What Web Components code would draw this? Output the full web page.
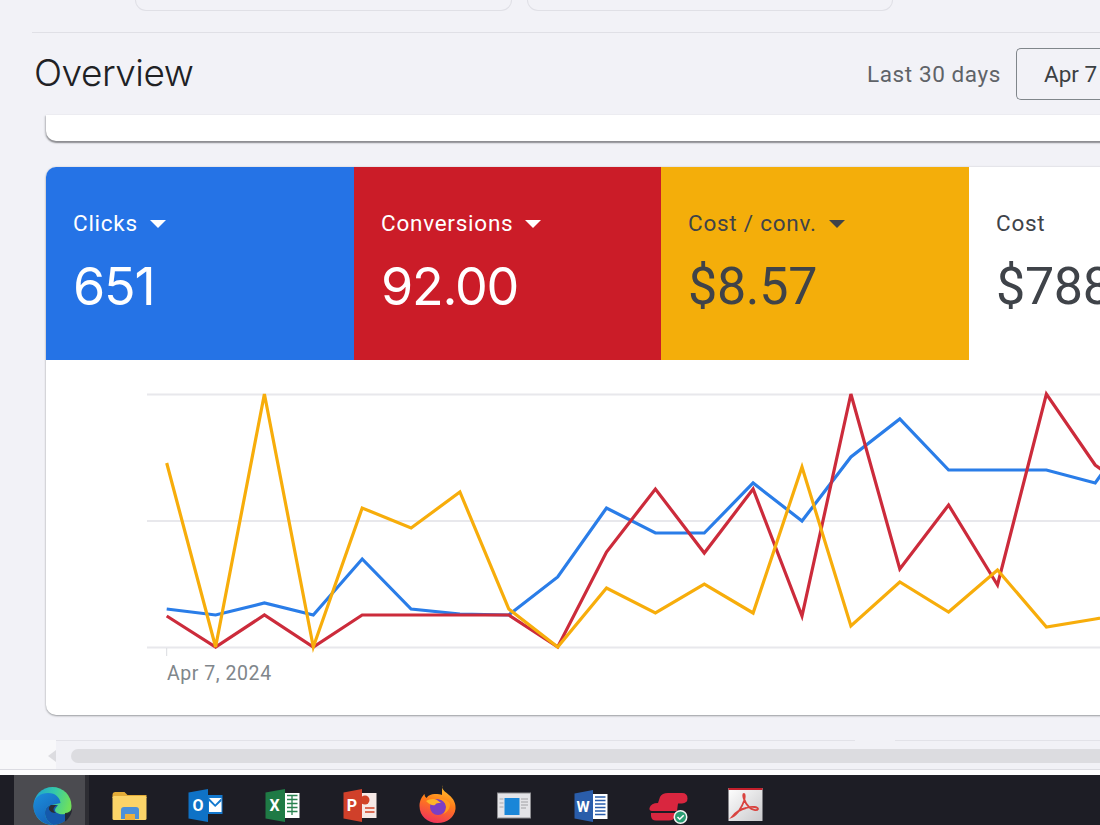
<!DOCTYPE html>
<html>
<head>
<meta charset="utf-8">
<title>Overview</title>
<style>
  html,body{margin:0;padding:0;height:825px;overflow:hidden;background:#f2f2f7;}
  body{font-family:"Roboto","Liberation Sans",sans-serif;}
</style>
</head>
<body>
<ads-page>
  <filter-stubs></filter-stubs>
  <overview-bar heading="Overview" range="Last 30 days" date="Apr 7"></overview-bar>
  <summary-stub></summary-stub>
  <metric-card>
    <metric-tile slot="tiles" label="Clicks" value="651" bg="#2573e6" fg="#fff" arrow font="Inter" tight></metric-tile>
    <metric-tile slot="tiles" label="Conversions" value="92.00" bg="#cb1c28" fg="#fff" arrow font="Inter" tight></metric-tile>
    <metric-tile slot="tiles" label="Cost / conv." value="$8.57" bg="#f4ae0a" fg="#3f4349" arrow></metric-tile>
    <metric-tile slot="tiles" label="Cost" value="$788" bg="#fff" fg="#3f4349"></metric-tile>
    <line-chart slot="chart" axis="Apr 7, 2024"></line-chart>
  </metric-card>
  <page-scrollbar></page-scrollbar>
  <task-bar></task-bar>
</ads-page>

<script>
class AdsPage extends HTMLElement {
  constructor(){
    super()
    this.attachShadow({mode:'open'}).innerHTML = `
      <style>
        :host{display:flex;flex-direction:column;width:1100px;height:825px;overflow:hidden;background:#f2f2f7;}
      </style>
      <slot></slot>`
  }
}

class FilterStubs extends HTMLElement {
  constructor(){
    super()
    this.attachShadow({mode:'open'}).innerHTML = `
      <style>
        :host{display:flex;gap:15px;height:11px;padding-left:135px;margin-bottom:21px;flex:none;}
        div{box-sizing:border-box;height:11px;border:1px solid #e0e0e6;border-top:0;border-radius:0 0 24px 24px;background:#f2f2f7;}
        .a{width:377px;}
        .b{width:366px;}
      </style>
      <div class="a"></div><div class="b"></div>`
  }
}

class OverviewBar extends HTMLElement {
  constructor(){
    super()
    this.attachShadow({mode:'open'}).innerHTML = `
      <style>
        :host{display:flex;flex:none;box-sizing:border-box;height:83px;margin-left:32px;border-top:1px solid #e0e0e6;align-items:flex-start;white-space:nowrap;}
        h1{margin:17px 0 0 2px;font:300 37px/46px "Inter","Roboto",sans-serif;letter-spacing:-.5px;color:#202124;flex:1;}
        .range{font:400 22.5px/52px "Roboto",sans-serif;color:#5f6368;margin:15px 15px 0 0;letter-spacing:.6px;}
        .date{box-sizing:border-box;flex:none;width:84px;height:52px;margin-top:15px;padding-left:27px;border:1px solid #80868b;border-right:0;border-radius:5px 0 0 5px;font:400 22.5px/50px "Roboto",sans-serif;color:#3c4043;overflow:hidden;}
      </style>
      <h1></h1><span class="range"></span><div class="date"></div>`
  }
  connectedCallback(){
    const root = this.shadowRoot
    root.querySelector('h1').textContent = this.getAttribute('heading')
    root.querySelector('.range').textContent = this.getAttribute('range')
    root.querySelector('.date').textContent = this.getAttribute('date')
  }
}

class SummaryStub extends HTMLElement {
  constructor(){
    super()
    this.attachShadow({mode:'open'}).innerHTML = `
      <style>
        :host{display:block;flex:none;height:26px;margin:0 -20px 26px 46px;background:#fff;border-radius:0 0 10px 10px;box-shadow:0 1.5px 1.5px 0 #8e8e92,-1px 1px 2px rgba(60,64,67,.25);}
      </style>`
  }
}

class MetricCard extends HTMLElement {
  constructor(){
    super()
    this.attachShadow({mode:'open'}).innerHTML = `
      <style>
        :host{display:block;flex:none;width:1300px;height:548px;margin-left:46px;background:#fff;border-radius:10px;overflow:hidden;box-shadow:0 1px 2px rgba(60,64,67,.45),0 0 2px rgba(60,64,67,.15);}
        .tiles{display:grid;grid-template-columns:308px 307px 308px 1fr;height:193px;}
      </style>
      <div class="tiles"><slot name="tiles"></slot></div>
      <slot name="chart"></slot>`
  }
}

class MetricTile extends HTMLElement {
  constructor(){
    super()
    this.attachShadow({mode:'open'}).innerHTML = `
      <style>
        :host{display:block;box-sizing:border-box;padding:42px 0 0 27px;background:var(--bg);color:var(--fg);white-space:nowrap;overflow:hidden;}
        .label{display:flex;align-items:center;gap:12px;height:28px;font:400 22.5px/28px "Roboto",sans-serif;letter-spacing:.75px;}
        .arrow{width:0;height:0;border:8px solid transparent;border-top:8px solid currentColor;border-bottom:0;margin-top:1px;}
        .value{margin-top:20px;font-weight:400;font-size:52px;line-height:60px;letter-spacing:-.3px;}
        :host([tight]) .value{letter-spacing:-1.2px;}
      </style>
      <div class="label"><span class="text"></span></div>
      <div class="value"></div>`
  }
  connectedCallback(){
    const root = this.shadowRoot
    this.style.setProperty('--bg', this.getAttribute('bg'))
    this.style.setProperty('--fg', this.getAttribute('fg'))
    root.querySelector('.text').textContent = this.getAttribute('label')
    const value = root.querySelector('.value')
    value.textContent = this.getAttribute('value')
    value.style.fontFamily = `"${this.getAttribute('font') || 'Roboto'}","Roboto",sans-serif`
    if(this.hasAttribute('arrow')){
      const arrow = document.createElement('span')
      arrow.className = 'arrow'
      root.querySelector('.label').appendChild(arrow)
    }
  }
}

// readings taken off the reference, one per day, y in card pixels below the tiles
const FIRST_X = 120.7, STEP = 48.87
const SERIES = [
  {color:'#2a7de8', y:[249,255,243,255,199,249,254,255,217,148,173,173,123,161,97,59,110,110,110,123,55]},
  {color:'#cc2b3b', y:[256,287,255,287,255,255,255,255,287,192,129,193,129,256,34,209,145,225,34,105,140]},
  {color:'#f7ad0b', y:[103,287,34,287,148,168,132,249,287,228,253,224,253,107,266,222,252,210,267,259,250]}
]

class LineChart extends HTMLElement {
  constructor(){
    super()
    this.attachShadow({mode:'open'}).innerHTML = `
      <style>
        :host{display:block;height:355px;}
        svg{display:block;}
        .axis{margin:3px 0 0 121px;font:400 19.5px/26px "Roboto",sans-serif;letter-spacing:.55px;color:#80868b;}
      </style>
      <svg width="1254" height="298" viewBox="0 0 1254 298">
        <g stroke="#e8e8ec" stroke-width="2" fill="none">
          <path d="M101 34.5H1254"/><path d="M101 161H1254"/><path d="M101 287.5H1254"/>
        </g>
        <path d="M120.7 288v8" stroke="#dadce0" stroke-width="1"/>
        <g class="lines" fill="none" stroke-width="3.2" stroke-linejoin="miter"></g>
      </svg>
      <div class="axis"></div>`
  }
  connectedCallback(){
    const root = this.shadowRoot
    root.querySelector('.axis').textContent = this.getAttribute('axis')
    const lines = root.querySelector('.lines')
    SERIES.forEach(s=>{
      const line = document.createElementNS('http://www.w3.org/2000/svg','polyline')
      line.setAttribute('stroke', s.color)
      line.setAttribute('points', s.y.map((y,i)=>`${(FIRST_X+i*STEP).toFixed(1)},${y}`).join(' '))
      lines.appendChild(line)
    })
  }
}

class PageScrollbar extends HTMLElement {
  constructor(){
    super()
    this.attachShadow({mode:'open'}).innerHTML = `
      <style>
        :host{display:flex;flex:none;box-sizing:border-box;height:35px;margin-top:25px;padding-bottom:5px;background:linear-gradient(#f8f8fa 0 30px,#fdfdfe 30px);padding-left:56px;position:relative;}
        :host::after{content:"";position:absolute;left:0;right:0;top:29px;height:1px;background:#dcdce2;}
        .track{flex:1;box-sizing:border-box;background:linear-gradient(90deg,#e2e2e8 0 799px,transparent 799px 839px,#e2e2e8 839px) top/100% 1px no-repeat,#f1f1f6;padding:9px 0 0 15px;position:relative;}
        .thumb{height:14px;background:#dcdce0;border-radius:7px 0 0 7px;}
        .arrow{position:absolute;left:-8px;top:10px;width:0;height:0;border:6px solid transparent;border-right:8px solid #dcdce0;border-left:0;}
      </style>
      <div class="track"><span class="arrow"></span><div class="thumb"></div></div>`
  }
}

const ICONS = {
  edge:`<defs>
      <linearGradient id="eg" x1="0" y1="0" x2="1" y2="0.3"><stop offset="0" stop-color="#1a9fd8"/><stop offset=".55" stop-color="#35c9a8"/><stop offset="1" stop-color="#6fe05c"/></linearGradient>
      <linearGradient id="eb" x1="0" y1="0" x2="0.6" y2="1"><stop offset="0" stop-color="#1c8fdc"/><stop offset="1" stop-color="#1562b8"/></linearGradient>
    </defs>
    <circle cx="24.5" cy="31" r="19" fill="url(#eg)"/>
    <path d="M5.5 31C5.5 22 13 18 20 18c8 0 12 5 12.5 10L24 30c-4 0-7 3-7 8 0 5 3 9 8 12C14 50 5.5 41 5.5 31z" fill="url(#eb)"/>
    <path d="M17 38c0-5 3-8 7-8h6c-1 2-3 3-3 5 0 3 5 5 10 4 3 0 5-1 6-2-2 8-10 13-18 13-5-3-8-7-8-12z" fill="#1559ac"/>
    <path d="M23 30h6c-2 1-3.500 2.500-3.500 4.500 0 1.500 1 2.500 2.500 3.500-3 0-6-1-7-3.500-.500-2 .500-3.500 2-4.500z" fill="#2c2c33"/>
    <path d="M37 38c3 0 6-2 7-4.500.5 4-3 10.500-7 13z" fill="#22242c" opacity=".9"/>`,
  folder:`<path d="M7.500 20q0-3 3-3h9l3 3h19v3h-34z" fill="#e3ac38"/>
    <rect x="7.500" y="21" width="34" height="24" rx="1.500" fill="#fbd468"/>
    <path d="M16 44v-9q0-3 3-3h12q3 0 3 3v9h-4v-5H20v5z" fill="#4a90d9"/>
    <rect x="20" y="39" width="10" height="6" fill="#eab03e"/>`,
  outlook:`<path d="M26 20h14.500v19H26z" fill="#1479cf"/>
    <path d="M27 23h12.500v14H27z" fill="#fff"/>
    <path d="M27 23l6.200 6.500 6.300-6.500v3l-6.300 6-6.200-6z" fill="#1479cf"/>
    <path d="M6.500 17.500L26 14v33L6.500 43.500z" fill="#0f72c6"/>
    <text x="16" y="36" text-anchor="middle" font-family="Roboto,sans-serif" font-weight="700" font-size="16" fill="#fff">O</text>`,
  excel:`<rect x="26" y="18" width="14.500" height="25" fill="#fff"/>
    <path d="M28 20.500h10.500M28 24.500h10.500M28 28.500h10.500M28 32.500h10.500M28 36.500h10.500M33 20v20" stroke="#2a8351" stroke-width="1.300" fill="none"/>
    <path d="M6.500 17.500L26 14v33L6.500 43.500z" fill="#1f7a45"/>
    <text x="15.500" y="36" text-anchor="middle" font-family="Roboto,sans-serif" font-weight="700" font-size="16" fill="#fff">X</text>`,
  ppt:`<rect x="26" y="18" width="14.500" height="25" fill="#f6e9e6"/>
    <circle cx="29" cy="25" r="4.500" fill="#d24326"/>
    <path d="M29 33h9.500M29 37h9.500" stroke="#d24326" stroke-width="1.600"/>
    <path d="M7.500 17.500L26 14v33L7.500 43.500z" fill="#d0402a"/>
    <text x="16" y="36" text-anchor="middle" font-family="Roboto,sans-serif" font-weight="700" font-size="16" fill="#fff">P</text>`,
  firefox:`<defs>
      <linearGradient id="ff" x1="0.6" y1="0" x2="0.3" y2="1"><stop offset="0" stop-color="#ffc52c"/><stop offset=".45" stop-color="#ff7a1a"/><stop offset="1" stop-color="#f0305e"/></linearGradient>
    </defs>
    <path d="M29 12c1 4 4 5 7 8 5 4 7 9 6.500 14-1 8-8 14-18 14-10 0-18-7-18-17 0-6 3-10 5-12 0 2 1 3 2 4 2-3 5-4 8-4 4 0 6 0 7.500 1 0-3 0-6 .5-10z" fill="url(#ff)"/>
    <circle cx="25" cy="32" r="8" fill="#7b3fc4"/>
    <path d="M13 26c3-2 8-3 11-1l4 3c-3 0-5 0-6 2-2 1-5 0-9-4z" fill="#ffb52a"/>
    <path d="M24 24c5 0 9 4 9 8 0 3-1 5-3 7 5-2 7-6 7-10-1-3-6-6-13-5z" fill="#ff9a1f"/>`,
  doc:`<rect x="7.500" y="18" width="33" height="25" fill="#e4e4e8" stroke="#8e8e92" stroke-width="1"/>
    <path d="M9.500 24h4M9.500 28h4M9.500 32h4" stroke="#a8a8ac" stroke-width="1"/>
    <rect x="14.500" y="23" width="15" height="17" fill="#1a86d8"/>
    <path d="M31 24h7M31 27h7M31 30h7M31 33h5" stroke="#a0a0a4" stroke-width="1"/>`,
  word:`<rect x="26" y="19" width="14.500" height="25" fill="#fff"/>
    <path d="M28 22h10.500M28 25.500h10.500M28 29h10.500M28 32.500h10.500M28 36h10.500M28 39.500h10.500" stroke="#2a5daa" stroke-width="1.500"/>
    <path d="M7.500 18.500L26 15v32L7.500 43.500z" fill="#2a5daa"/>
    <text x="16" y="37" text-anchor="middle" font-family="Roboto,sans-serif" font-weight="700" font-size="15" fill="#fff">W</text>`,
  express:`<path d="M5.500 33Q7 28 14 28L16 22Q18 18 24 18H38Q43.500 18 43.500 23.500Q43.500 28 38 28.500H34L33 36H8Q5 36 5.500 33z" fill="#d9263f"/>
    <path d="M7 38H33L31 42Q29 45.500 25 45.500H12Q7.500 45.500 7 41z" fill="#d9263f"/>
    <circle cx="36.500" cy="42" r="7" fill="#f4f4f4"/>
    <circle cx="36.500" cy="42" r="5.500" fill="#2a9d73"/>
    <path d="M33.500 42l2.200 2.200 4-4" stroke="#fff" stroke-width="1.600" fill="none"/>`,
  acrobat:`<defs><linearGradient id="ac" x1="0" y1="0" x2="1" y2="1"><stop offset="0" stop-color="#fff"/><stop offset="1" stop-color="#c9c9cc"/></linearGradient></defs>
    <rect x="7.500" y="13" width="34" height="33" fill="url(#ac)"/>
    <rect x="7.500" y="13" width="34" height="2" fill="#c4202c"/>
    <path d="M11 42c5-2 10-10 12-16 1-4 1-7 0-7-2 0 0 8 5 13 3 3 8 4 9 2 .500-2-6-3-12-1-5 1-10 4-14 9z" fill="none" stroke="#d9433f" stroke-width="1.800"/>`
}

class TaskIcon extends HTMLElement {
  constructor(){
    super()
    this.attachShadow({mode:'open'}).innerHTML = `
      <style>
        :host{display:flex;justify-content:center;width:77px;height:50px;flex:none;}
        :host([active]){background:linear-gradient(90deg,#4b4b50 0 71px,#2d2d33 71px 75px,transparent 75px);}
        svg{display:block;}
      </style>
      <svg width="50" height="50" viewBox="0 0 50 50"></svg>`
  }
  connectedCallback(){
    this.shadowRoot.querySelector('svg').innerHTML = ICONS[this.getAttribute('name')]
  }
}

class TaskBar extends HTMLElement {
  constructor(){
    super()
    this.attachShadow({mode:'open'}).innerHTML = `
      <style>
        :host{display:flex;flex:none;height:50px;margin-top:auto;padding-left:14px;background:#1d1d25;overflow:hidden;}
      </style>`
    Object.keys(ICONS).forEach((name,i)=>{
      const icon = document.createElement('task-icon')
      icon.setAttribute('name', name)
      if(i === 0) icon.setAttribute('active','')
      this.shadowRoot.appendChild(icon)
    })
  }
}

customElements.define('ads-page', AdsPage)
customElements.define('filter-stubs', FilterStubs)
customElements.define('overview-bar', OverviewBar)
customElements.define('summary-stub', SummaryStub)
customElements.define('metric-card', MetricCard)
customElements.define('metric-tile', MetricTile)
customElements.define('line-chart', LineChart)
customElements.define('page-scrollbar', PageScrollbar)
customElements.define('task-icon', TaskIcon)
customElements.define('task-bar', TaskBar)
</script>
</body>
</html>
